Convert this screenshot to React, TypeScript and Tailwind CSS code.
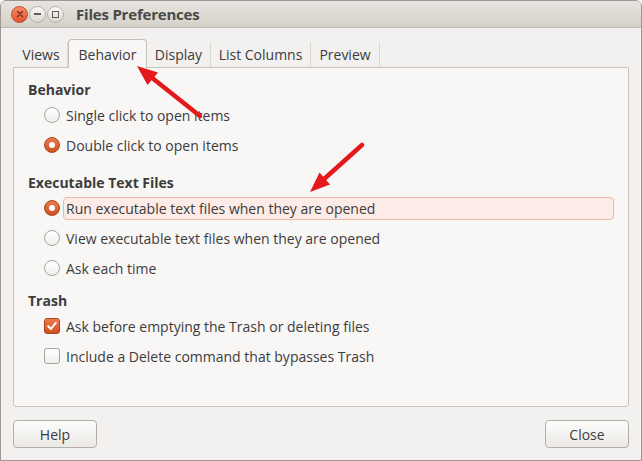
import React from "react";

function Radio({ checked }: { checked?: boolean }) {
  return checked ? (
    <div className="w-[16px] h-[16px] rounded-full bg-gradient-to-b from-[#ee7a4c] to-[#cf4f1f] border border-[#a8461f] flex items-center justify-center shrink-0">
      <div className="w-[6px] h-[6px] rounded-full bg-white" />
    </div>
  ) : (
    <div className="w-[16px] h-[16px] rounded-full bg-gradient-to-b from-[#ffffff] to-[#f1efed] border border-[#a9a6a1] shrink-0" />
  );
}

function Check({ checked }: { checked?: boolean }) {
  return checked ? (
    <div className="w-[16px] h-[16px] rounded-[3px] bg-gradient-to-b from-[#ee7a4c] to-[#cf4f1f] border border-[#a8461f] flex items-center justify-center shrink-0">
      <svg width="12" height="12" viewBox="0 0 12 12">
        <path d="M2.2 6.2 L4.9 9 L9.8 2.8" fill="none" stroke="#fff" strokeWidth="2" strokeLinecap="round" strokeLinejoin="round" />
      </svg>
    </div>
  ) : (
    <div className="w-[16px] h-[16px] rounded-[3px] bg-gradient-to-b from-[#ffffff] to-[#f1efed] border border-[#a9a6a1] shrink-0" />
  );
}

function Row({ children, control, highlight }: { children: React.ReactNode; control: React.ReactNode; highlight?: boolean }) {
  return (
    <div className="h-[30px] flex items-center pl-[30px]">
      <div className="w-[16px] flex items-center">{control}</div>
      <div
        className={
          highlight
            ? "ml-[3px] w-[551px] h-[23px] flex items-center pl-[2px] bg-[#fcebe6] border border-[#eab6a6] rounded-[4px]"
            : "ml-[3px] h-[23px] flex items-center pl-[3px]"
        }
      >
        {children}
      </div>
    </div>
  );
}

function Heading({ children, mt }: { children: React.ReactNode; mt: string }) {
  return <div className={`h-[21px] flex items-start pl-[14px] font-bold ${mt}`}>{children}</div>;
}

export default function App() {
  return (
    <div className="relative w-[642px] h-[461px] overflow-hidden bg-[#f2f1f0] font-['Open_Sans',sans-serif] text-[14px] text-[#3c3c3c] border border-[#9d9992] rounded-t-[6px] flex flex-col">
      {/* Title bar */}
      <div className="h-[27px] shrink-0 flex items-center bg-gradient-to-b from-[#e7e4df] to-[#d5d1ca] border-b border-[#bdb9b1]">
        <div className="flex items-center gap-[1px] pl-[10px]">
          <div className="w-[17px] h-[17px] rounded-full bg-gradient-to-b from-[#f58a63] to-[#e2552e] border border-[#c04a28] flex items-center justify-center">
            <svg width="8" height="8" viewBox="0 0 8 8">
              <path d="M1.5 1.5 L6.5 6.5 M6.5 1.5 L1.5 6.5" stroke="#6a2a18" strokeWidth="1.3" strokeLinecap="round" />
            </svg>
          </div>
          <div className="w-[17px] h-[17px] rounded-full bg-gradient-to-b from-[#fbfaf8] to-[#d9d6cf] border border-[#b3afa7] flex items-center justify-center">
            <div className="w-[7px] h-[1.5px] bg-[#5f5d59]" />
          </div>
          <div className="w-[17px] h-[17px] rounded-full bg-gradient-to-b from-[#fbfaf8] to-[#d9d6cf] border border-[#b3afa7] flex items-center justify-center">
            <div className="w-[7px] h-[7px] border border-[#5f5d59]" />
          </div>
        </div>
        <div className="ml-[12px] font-bold text-[15px] text-[#4a4945] tracking-[-0.2px]">Files Preferences</div>
      </div>

      {/* Body */}
      <div className="flex-1 flex flex-col pl-[12px] pr-[12px]">
        {/* Tabs */}
        <div className="mt-[11px] h-[28px] flex items-end relative z-10">
          <div className="w-[55px] h-[25px] flex items-center justify-center pl-[2px] border-r border-[#d9d5cf]">Views</div>
          <div className="w-[79px] h-[29px] -mb-px flex items-center justify-center bg-[#f8f7f6] border border-b-0 border-[#c5c1ba] rounded-t-[4px]">Behavior</div>
          <div className="w-[64px] h-[25px] flex items-center justify-center border-r border-[#d9d5cf]">Display</div>
          <div className="w-[100px] h-[25px] flex items-center justify-center border-r border-[#d9d5cf]">List Columns</div>
          <div className="w-[69px] h-[25px] flex items-center justify-center border-r border-[#d9d5cf]">Preview</div>
        </div>
        {/* Panel */}
        <div className="w-[616px] h-[340px] bg-[#f8f7f6] border border-[#c8c4bd] rounded-b-[3px] flex flex-col pt-[11px]">
          <Heading mt="">Behavior</Heading>
          <Row control={<Radio />}>Single click to open items</Row>
          <Row control={<Radio checked />}>Double click to open items</Row>
          <Heading mt="mt-[12px]">Executable Text Files</Heading>
          <Row control={<Radio checked />} highlight>
            Run executable text files when they are opened
          </Row>
          <Row control={<Radio />}>View executable text files when they are opened</Row>
          <Row control={<Radio />}>Ask each time</Row>
          <Heading mt="mt-[7px]">Trash</Heading>
          <Row control={<Check checked />}>Ask before emptying the Trash or deleting files</Row>
          <Row control={<Check />}>Include a Delete command that bypasses Trash</Row>
        </div>
        {/* Buttons */}
        <div className="mt-[13px] flex justify-between w-[616px]">
          <button className="w-[84px] h-[28px] rounded-[4px] border border-[#b4b0a9] bg-gradient-to-b from-[#fdfdfc] to-[#ebe9e6] text-[#3c3c3c] text-[14px]">Help</button>
          <button className="w-[84px] h-[28px] rounded-[4px] border border-[#b4b0a9] bg-gradient-to-b from-[#fdfdfc] to-[#ebe9e6] text-[#3c3c3c] text-[14px]">Close</button>
        </div>
      </div>

      {/* Annotation arrows */}
      <svg className="absolute left-[-1px] top-[-1px] pointer-events-none z-20" width="642" height="461" viewBox="0 0 642 461">
        <line x1="200" y1="116" x2="151" y2="77" stroke="#e3191b" strokeWidth="4.5" strokeLinecap="round" />
        <polygon points="137,66 158,72.5 147.5,85" fill="#e3191b" />
        <line x1="362" y1="145" x2="323" y2="180" stroke="#e3191b" strokeWidth="4.5" strokeLinecap="round" />
        <polygon points="310,192 319.5,172.5 330,184.5" fill="#e3191b" />
      </svg>
    </div>
  );
}
